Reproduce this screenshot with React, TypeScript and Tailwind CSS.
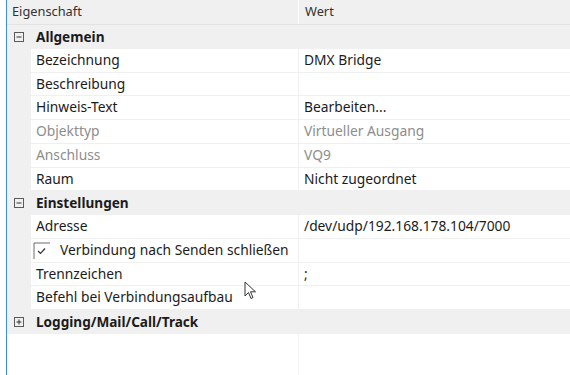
import { ReactNode } from 'react'

type Row =
  | { kind: 'group'; label: string; open: boolean }
  | { kind: 'prop'; label: string; value?: string; muted?: boolean }
  | { kind: 'check'; label: string }

const rows: Row[] = [
  { kind: 'group', label: 'Allgemein', open: true },
  { kind: 'prop', label: 'Bezeichnung', value: 'DMX Bridge' },
  { kind: 'prop', label: 'Beschreibung' },
  { kind: 'prop', label: 'Hinweis-Text', value: 'Bearbeiten...' },
  { kind: 'prop', label: 'Objekttyp', value: 'Virtueller Ausgang', muted: true },
  { kind: 'prop', label: 'Anschluss', value: 'VQ9', muted: true },
  { kind: 'prop', label: 'Raum', value: 'Nicht zugeordnet' },
  { kind: 'group', label: 'Einstellungen', open: true },
  { kind: 'prop', label: 'Adresse', value: '/dev/udp/192.168.178.104/7000' },
  { kind: 'check', label: 'Verbindung nach Senden schließen' },
  { kind: 'prop', label: 'Trennzeichen', value: ';' },
  { kind: 'prop', label: 'Befehl bei Verbindungsaufbau' },
  { kind: 'group', label: 'Logging/Mail/Call/Track', open: false },
]

function ExpandBox({ open }: { open: boolean }) {
  return (
    <svg width="10" height="10" viewBox="0 0 10 10" className="shrink-0">
      <rect x="0.5" y="0.5" width="9" height="9" fill="none" stroke="#5a5a5a" />
      <line x1="2.5" y1="5" x2="7.5" y2="5" stroke="#333" />
      {!open && <line x1="5" y1="2.5" x2="5" y2="7.5" stroke="#333" />}
    </svg>
  )
}

function RowShell({ children }: { children: ReactNode }) {
  return <div className="flex h-[23.75px] bg-[#f0f0f0]">{children}</div>
}

export default function App() {
  return (
    <div
      className="relative flex h-[375px] w-[570px] overflow-hidden bg-white text-[13.8px] text-[#1b1b1b]"
      style={{ fontFamily: '"Noto Sans", "Open Sans", sans-serif' }}
    >
      <div className="w-[6px] shrink-0 bg-white" />
      <div className="w-[1px] shrink-0 bg-[#3b8fe0]" />
      <div className="flex flex-1 flex-col">
        {/* Kopfzeile */}
        <div className="flex h-[25px] border-b border-[#e3e3e3] bg-[#f0f0f0] text-[12.8px] text-[#333]">
          <div className="flex w-[292px] items-center border-r border-[#fafafa] pl-[5px]">Eigenschaft</div>
          <div className="flex flex-1 items-center pl-[6px]">Wert</div>
        </div>

        {rows.map((row, i) => {
          if (row.kind === 'group') {
            return (
              <RowShell key={i}>
                <div className="flex w-[24px] items-center justify-center">
                  <ExpandBox open={row.open} />
                </div>
                <div className="flex items-center pl-[5px] text-[13.6px] font-bold">{row.label}</div>
              </RowShell>
            )
          }
          if (row.kind === 'check') {
            return (
              <RowShell key={i}>
                <div className="w-[24px]" />
                <div className="relative flex w-[267px] items-center border-b border-[#f0f0f0] bg-white">
                  <div className="flex items-center gap-[10px] whitespace-nowrap pl-[2px]">
                    <svg width="17" height="17" viewBox="0 0 17 17" className="shrink-0">
                      <path d="M1 17 V1 H17" fill="none" stroke="#6a6a6a" strokeWidth="1" />
                      <path d="M5 9 L7.5 11.5 L12 6.5" fill="none" stroke="#333" strokeWidth="1.2" />
                    </svg>
                    <span className="relative z-10">{row.label}</span>
                  </div>
                </div>
                <div className="w-[1px] bg-[#f0f0f0]" />
                <div className="flex-1 border-b border-[#f0f0f0] bg-white" />
              </RowShell>
            )
          }
          const tone = row.muted ? 'text-[#8d8d8d]' : ''
          return (
            <RowShell key={i}>
              <div className="w-[24px]" />
              <div className={`flex w-[267px] items-center border-b border-[#f0f0f0] bg-white pl-[5px] ${tone}`}>
                {row.label}
              </div>
              <div className="w-[1px] bg-[#f0f0f0]" />
              <div className={`flex flex-1 items-center border-b border-[#f0f0f0] bg-white pl-[5px] ${tone}`}>
                {row.value}
              </div>
            </RowShell>
          )
        })}

        <div className="flex flex-1">
          <div className="w-[291px]" />
          <div className="w-[1px] bg-[#f3f3f3]" />
          <div className="flex-1" />
        </div>
      </div>

      {/* Mauszeiger */}
      <svg className="absolute left-[244px] top-[281px]" width="14" height="20" viewBox="0 0 14 20">
        <path d="M1 1 L1 15 L4.5 11.5 L7 17.5 L9 16.5 L6.5 10.8 L11.5 10.8 Z" fill="white" stroke="#333" strokeWidth="1" />
      </svg>
    </div>
  )
}
